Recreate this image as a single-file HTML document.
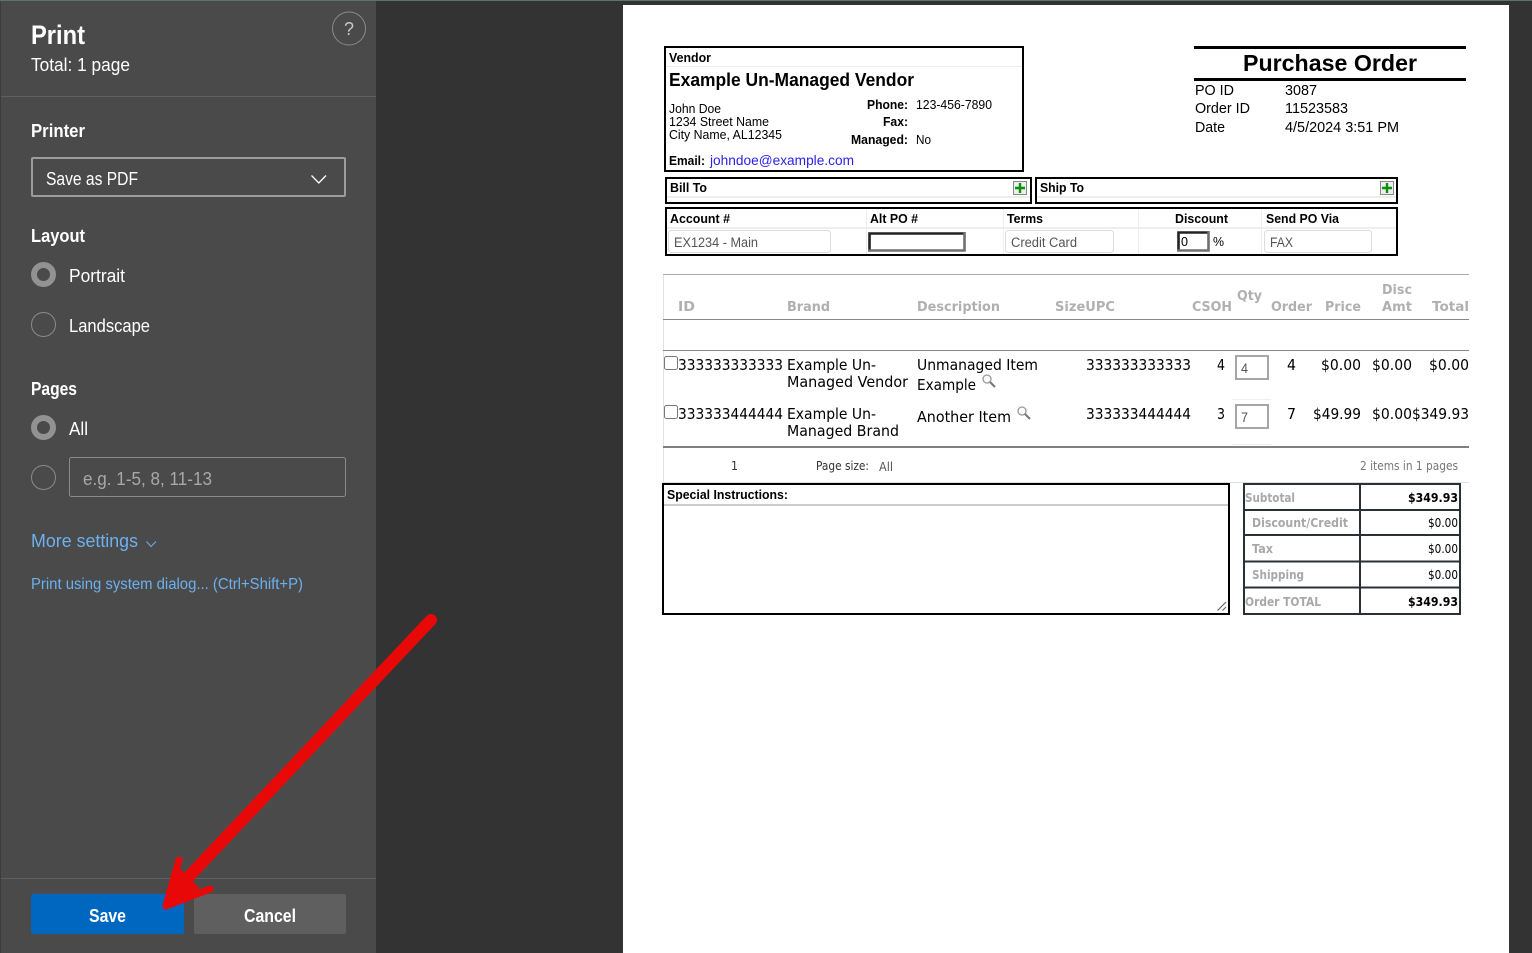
<!DOCTYPE html>
<html><head><meta charset="utf-8"><title>Print</title>
<style>
html,body{margin:0;padding:0;width:1532px;height:953px;overflow:hidden;background:#333}
svg{display:block}
text{font-family:"Liberation Sans",sans-serif;white-space:pre}
.w{fill:#fff;font-size:18.500px}
.sb{fill:#fff;font-size:18.500px;font-weight:bold}
.b{fill:#000;font-weight:bold;font-size:12.500px}
.n{fill:#000;font-size:12.500px}
.po{fill:#000;font-size:14.500px}
.in{fill:#555;font-size:13.500px}
.h{font-family:"DejaVu Sans",sans-serif;font-weight:bold;font-size:13.500px;fill:#b0b0b0}
.r{font-family:"DejaVu Sans",sans-serif;fill:#000;font-size:15.500px}
.l{font-family:"DejaVu Sans",sans-serif;font-weight:bold;font-size:12px;fill:#a8a8a8}
.v{font-family:"DejaVu Sans",sans-serif;fill:#000;font-size:12.500px}
.vb{font-family:"DejaVu Sans",sans-serif;fill:#000;font-size:12.500px;font-weight:bold}
.pg{font-family:"DejaVu Sans",sans-serif;fill:#333;font-size:12.500px}
</style></head>
<body>
<svg width="1532" height="953" viewBox="0 0 1532 953" xmlns="http://www.w3.org/2000/svg">
<rect width="1532" height="953" fill="#333"/>
<rect width="1532" height="1" fill="#5a7472"/>
<rect x="0" y="1" width="376" height="952" fill="#4a4a4a"/>
<rect x="0" y="1" width="1" height="952" fill="#3c3c3c"/>
<rect x="623" y="5" width="886" height="948" fill="#fff"/>

<!-- sidebar -->
<text x="31" y="44" class="sb" style="font-size:26.500px" textLength="54" lengthAdjust="spacingAndGlyphs">Print</text>
<text x="31" y="71" class="w" textLength="99" lengthAdjust="spacingAndGlyphs">Total: 1 page</text>
<circle cx="349" cy="28.500" r="16.500" fill="none" stroke="#8a8a8a" stroke-width="1"/>
<text x="344" y="35" fill="#c8c8c8" style="font-size:18px" textLength="10" lengthAdjust="spacingAndGlyphs">?</text>
<rect x="1" y="96" width="375" height="1" fill="#5f5f5f"/>
<text x="31" y="137" class="sb" textLength="54" lengthAdjust="spacingAndGlyphs">Printer</text>
<rect x="32" y="158" width="313" height="38" rx="1" fill="none" stroke="#9c9c9c" stroke-width="2"/>
<text x="46" y="185" class="w" textLength="92" lengthAdjust="spacingAndGlyphs">Save as PDF</text>
<path d="M311.500 175.500 L318.800 183 L326 175.500" fill="none" stroke="#fff" stroke-width="1.300"/>
<text x="31" y="242" class="sb" textLength="54" lengthAdjust="spacingAndGlyphs">Layout</text>
<circle cx="43.500" cy="274.500" r="9.500" fill="#4a4a4a" stroke="#929292" stroke-width="6"/>
<text x="69" y="282" class="w" textLength="56" lengthAdjust="spacingAndGlyphs">Portrait</text>
<circle cx="43.500" cy="324.500" r="12" fill="none" stroke="#8a8a8a" stroke-width="1"/>
<text x="69" y="332" class="w" textLength="81" lengthAdjust="spacingAndGlyphs">Landscape</text>
<text x="31" y="395" class="sb" textLength="46" lengthAdjust="spacingAndGlyphs">Pages</text>
<circle cx="43.500" cy="427.500" r="9.500" fill="#4a4a4a" stroke="#929292" stroke-width="6"/>
<text x="69" y="435" class="w" textLength="19" lengthAdjust="spacingAndGlyphs">All</text>
<circle cx="43.500" cy="477.500" r="12" fill="none" stroke="#8a8a8a" stroke-width="1"/>
<rect x="69.500" y="457.500" width="276" height="39" rx="2" fill="none" stroke="#8a8a8a" stroke-width="1"/>
<text x="83" y="485" fill="#a8a8a8" style="font-size:18px" textLength="129" lengthAdjust="spacingAndGlyphs">e.g. 1-5, 8, 11-13</text>
<text x="31" y="547" fill="#6cb0ee" style="font-size:18.500px" textLength="107" lengthAdjust="spacingAndGlyphs">More settings</text>
<path d="M146.500 541.500 L151 546.500 L156 541.500" fill="none" stroke="#6cb0ee" stroke-width="1"/>
<text x="31" y="589" fill="#6cb0ee" style="font-size:15.500px" textLength="272" lengthAdjust="spacingAndGlyphs">Print using system dialog... (Ctrl+Shift+P)</text>
<rect x="1" y="878" width="375" height="1" fill="#5f5f5f"/>
<rect x="31" y="894" width="153" height="40" rx="2" fill="#0067c0"/>
<text x="89" y="922" class="sb" textLength="37" lengthAdjust="spacingAndGlyphs">Save</text>
<rect x="194" y="894" width="152" height="40" rx="2" fill="#5f5f5f"/>
<text x="244" y="922" class="sb" textLength="52" lengthAdjust="spacingAndGlyphs">Cancel</text>

<!-- vendor -->
<rect x="665" y="47" width="358" height="124" fill="none" stroke="#000" stroke-width="2"/>
<rect x="666" y="66" width="356" height="1" fill="#eee"/>
<text x="669" y="62" class="b" textLength="42" lengthAdjust="spacingAndGlyphs">Vendor</text>
<text x="669" y="86" class="b" style="font-size:18.500px" textLength="245" lengthAdjust="spacingAndGlyphs">Example Un-Managed Vendor</text>
<text x="669" y="113" class="n" textLength="52" lengthAdjust="spacingAndGlyphs">John Doe</text>
<text x="669" y="126" class="n" textLength="100" lengthAdjust="spacingAndGlyphs">1234 Street Name</text>
<text x="669" y="139" class="n" textLength="113" lengthAdjust="spacingAndGlyphs">City Name, AL12345</text>
<text x="867" y="109" class="b" textLength="41" lengthAdjust="spacingAndGlyphs">Phone:</text>
<text x="916" y="109" class="n" textLength="76" lengthAdjust="spacingAndGlyphs">123-456-7890</text>
<text x="883" y="126" class="b" textLength="25" lengthAdjust="spacingAndGlyphs">Fax:</text>
<text x="851" y="144" class="b" textLength="57" lengthAdjust="spacingAndGlyphs">Managed:</text>
<text x="916" y="144" class="n" textLength="15" lengthAdjust="spacingAndGlyphs">No</text>
<text x="669" y="165" class="b" textLength="36" lengthAdjust="spacingAndGlyphs">Email:</text>
<text x="710" y="165" fill="#2a1ee8" style="font-size:13.500px" textLength="144" lengthAdjust="spacingAndGlyphs">johndoe@example.com</text>

<!-- PO header -->
<rect x="1194" y="46" width="272" height="3" fill="#000"/>
<rect x="1194" y="78" width="272" height="3" fill="#000"/>
<text x="1243" y="71" font-weight="bold" fill="#000" style="font-size:23.500px" textLength="174" lengthAdjust="spacingAndGlyphs">Purchase Order</text>
<text x="1195" y="95" class="po" textLength="39" lengthAdjust="spacingAndGlyphs">PO ID</text>
<text x="1285" y="95" class="po" textLength="32" lengthAdjust="spacingAndGlyphs">3087</text>
<text x="1195" y="113" class="po" textLength="55" lengthAdjust="spacingAndGlyphs">Order ID</text>
<text x="1285" y="113" class="po" textLength="63" lengthAdjust="spacingAndGlyphs">11523583</text>
<text x="1195" y="132" class="po" textLength="30" lengthAdjust="spacingAndGlyphs">Date</text>
<text x="1285" y="132" class="po" textLength="114" lengthAdjust="spacingAndGlyphs">4/5/2024 3:51 PM</text>

<!-- bill / ship -->
<rect x="666" y="178" width="365" height="25" fill="none" stroke="#000" stroke-width="2"/>
<rect x="667" y="196" width="363" height="2" fill="#eee"/>
<text x="670" y="192" class="b" textLength="37" lengthAdjust="spacingAndGlyphs">Bill To</text>
<rect x="1013.500" y="181.500" width="13" height="13" fill="#eee" stroke="#888"/>
<path d="M1020 183V193M1015 188H1025" stroke="#0a900a" stroke-width="2.400"/>
<rect x="1036" y="178" width="361" height="25" fill="none" stroke="#000" stroke-width="2"/>
<rect x="1037" y="196" width="359" height="2" fill="#eee"/>
<text x="1040" y="192" class="b" textLength="44" lengthAdjust="spacingAndGlyphs">Ship To</text>
<rect x="1380.500" y="181.500" width="13" height="13" fill="#eee" stroke="#888"/>
<path d="M1387 183V193M1382 188H1392" stroke="#0a900a" stroke-width="2.400"/>

<!-- account row -->
<rect x="666" y="208" width="731" height="47" fill="none" stroke="#000" stroke-width="2"/>
<path d="M667 228H1396" stroke="#eee" stroke-width="2"/>
<path d="M866.500 209V254M1003.500 209V254M1138.500 209V254M1261.500 209V254" stroke="#eee" stroke-width="1"/>
<text x="670" y="223" class="b" textLength="60" lengthAdjust="spacingAndGlyphs">Account #</text>
<text x="870" y="223" class="b" textLength="48" lengthAdjust="spacingAndGlyphs">Alt PO #</text>
<text x="1007" y="223" class="b" textLength="36" lengthAdjust="spacingAndGlyphs">Terms</text>
<text x="1175" y="223" class="b" textLength="53" lengthAdjust="spacingAndGlyphs">Discount</text>
<text x="1266" y="223" class="b" textLength="73" lengthAdjust="spacingAndGlyphs">Send PO Via</text>
<rect x="668.500" y="230.500" width="162" height="22" rx="3" fill="#fff" stroke="#ddd"/>
<text x="674" y="247" class="in" textLength="84" lengthAdjust="spacingAndGlyphs">EX1234 - Main</text>
<path d="M869.500 251V233.500H965" fill="none" stroke="#222" stroke-width="2.600"/>
<path d="M964.500 232V250.500H868" fill="none" stroke="#707070" stroke-width="2.600"/>
<rect x="1005.500" y="230.500" width="108" height="22" rx="3" fill="#fff" stroke="#ddd"/>
<text x="1011" y="247" class="in" textLength="66" lengthAdjust="spacingAndGlyphs">Credit Card</text>
<path d="M1178.500 251V232.500H1209" fill="none" stroke="#222" stroke-width="2.600"/>
<path d="M1208.500 231V250.500H1177" fill="none" stroke="#707070" stroke-width="2.600"/>
<text x="1181" y="246" class="n" textLength="7" lengthAdjust="spacingAndGlyphs">0</text>
<text x="1213" y="246" class="n" textLength="11" lengthAdjust="spacingAndGlyphs">%</text>
<rect x="1264.500" y="230.500" width="107" height="22" rx="3" fill="#fff" stroke="#ddd"/>
<text x="1270" y="247" class="in" textLength="23" lengthAdjust="spacingAndGlyphs">FAX</text>

<!-- items table -->
<rect x="663" y="274" width="806" height="1" fill="#aaa"/>
<rect x="663" y="275" width="1" height="208" fill="#e2e2e2"/>
<rect x="663" y="319" width="806" height="1" fill="#888"/>
<rect x="663" y="350" width="806" height="1" fill="#888"/>
<rect x="663" y="446" width="806" height="2" fill="#808080"/>
<rect x="663" y="482" width="806" height="1" fill="#ddd"/>
<rect x="1232" y="399" width="39" height="1" fill="#f0f0f0"/>
<rect x="1232" y="444" width="39" height="1" fill="#f0f0f0"/>
<text x="678" y="311" class="h" textLength="17" lengthAdjust="spacingAndGlyphs">ID</text>
<text x="787" y="311" class="h" textLength="43" lengthAdjust="spacingAndGlyphs">Brand</text>
<text x="917" y="311" class="h" textLength="83" lengthAdjust="spacingAndGlyphs">Description</text>
<text x="1055" y="311" class="h" textLength="60" lengthAdjust="spacingAndGlyphs">SizeUPC</text>
<text x="1192" y="311" class="h" textLength="40" lengthAdjust="spacingAndGlyphs">CSOH</text>
<text x="1237" y="300" class="h" textLength="25" lengthAdjust="spacingAndGlyphs">Qty</text>
<text x="1271" y="311" class="h" textLength="41" lengthAdjust="spacingAndGlyphs">Order</text>
<text x="1325" y="311" class="h" textLength="36" lengthAdjust="spacingAndGlyphs">Price</text>
<text x="1382" y="294" class="h" textLength="30" lengthAdjust="spacingAndGlyphs">Disc</text>
<text x="1382" y="311" class="h" textLength="30" lengthAdjust="spacingAndGlyphs">Amt</text>
<text x="1432" y="311" class="h" textLength="37" lengthAdjust="spacingAndGlyphs">Total</text>

<rect x="664.500" y="356.500" width="13" height="13" rx="2" fill="#fff" stroke="#777"/>
<text x="678" y="370" class="r" textLength="105" lengthAdjust="spacingAndGlyphs">333333333333</text>
<text x="787" y="370" class="r" textLength="89" lengthAdjust="spacingAndGlyphs">Example Un-</text>
<text x="787" y="387" class="r" textLength="121" lengthAdjust="spacingAndGlyphs">Managed Vendor</text>
<text x="917" y="370" class="r" textLength="121" lengthAdjust="spacingAndGlyphs">Unmanaged Item</text>
<text x="917" y="390" class="r" textLength="59" lengthAdjust="spacingAndGlyphs">Example</text>
<circle cx="987" cy="379" r="4" fill="#fff" stroke="#999" stroke-width="1.300"/>
<path d="M990 382L995 387" stroke="#777" stroke-width="2"/>
<text x="1086" y="370" class="r" textLength="105" lengthAdjust="spacingAndGlyphs">333333333333</text>
<text x="1217" y="370" class="r" textLength="8" lengthAdjust="spacingAndGlyphs">4</text>
<rect x="1236" y="356" width="32" height="23" fill="#fff" stroke="#a6a6a6" stroke-width="2"/>
<text x="1241" y="373" class="in" textLength="7" lengthAdjust="spacingAndGlyphs">4</text>
<text x="1287" y="370" class="r" textLength="9" lengthAdjust="spacingAndGlyphs">4</text>
<text x="1321" y="370" class="r" textLength="40" lengthAdjust="spacingAndGlyphs">$0.00</text>
<text x="1372" y="370" class="r" textLength="40" lengthAdjust="spacingAndGlyphs">$0.00</text>
<text x="1429" y="370" class="r" textLength="40" lengthAdjust="spacingAndGlyphs">$0.00</text>

<rect x="664.500" y="405.500" width="13" height="13" rx="2" fill="#fff" stroke="#777"/>
<text x="678" y="419" class="r" textLength="105" lengthAdjust="spacingAndGlyphs">333333444444</text>
<text x="787" y="419" class="r" textLength="89" lengthAdjust="spacingAndGlyphs">Example Un-</text>
<text x="787" y="436" class="r" textLength="112" lengthAdjust="spacingAndGlyphs">Managed Brand</text>
<text x="917" y="422" class="r" textLength="94" lengthAdjust="spacingAndGlyphs">Another Item</text>
<circle cx="1022" cy="411" r="4" fill="#fff" stroke="#999" stroke-width="1.300"/>
<path d="M1025 414L1030 419" stroke="#777" stroke-width="2"/>
<text x="1086" y="419" class="r" textLength="105" lengthAdjust="spacingAndGlyphs">333333444444</text>
<text x="1217" y="419" class="r" textLength="8" lengthAdjust="spacingAndGlyphs">3</text>
<rect x="1236" y="405" width="32" height="23" fill="#fff" stroke="#a6a6a6" stroke-width="2"/>
<text x="1241" y="422" class="in" textLength="7" lengthAdjust="spacingAndGlyphs">7</text>
<text x="1287" y="419" class="r" textLength="9" lengthAdjust="spacingAndGlyphs">7</text>
<text x="1313" y="419" class="r" textLength="48" lengthAdjust="spacingAndGlyphs">$49.99</text>
<text x="1372" y="419" class="r" textLength="40" lengthAdjust="spacingAndGlyphs">$0.00</text>
<text x="1412" y="419" class="r" textLength="57" lengthAdjust="spacingAndGlyphs">$349.93</text>

<text x="731" y="470" class="pg" textLength="7" lengthAdjust="spacingAndGlyphs">1</text>
<text x="816" y="470" class="pg" textLength="53" lengthAdjust="spacingAndGlyphs">Page size:</text>
<text x="879" y="471" class="pg" style="fill:#555" textLength="14" lengthAdjust="spacingAndGlyphs">All</text>
<text x="1360" y="470" class="pg" style="fill:#777" textLength="98" lengthAdjust="spacingAndGlyphs">2 items in 1 pages</text>

<!-- special instructions -->
<rect x="663" y="484" width="566" height="130" fill="#fff" stroke="#000" stroke-width="2"/>
<rect x="664" y="504" width="564" height="2" fill="#ccc"/>
<text x="667" y="499" class="b" textLength="121" lengthAdjust="spacingAndGlyphs">Special Instructions:</text>
<path d="M1217.500 610.500L1226 602M1222.500 610.500L1226 607" stroke="#666" stroke-width="1.200"/>

<!-- totals -->
<rect x="1244" y="484" width="216" height="130" fill="#fff" stroke="#2b3036" stroke-width="2"/>
<path d="M1360 484V614" stroke="#2b3036" stroke-width="2"/>
<path d="M1244 510H1460M1244 535H1460M1244 561.500H1460M1244 587.500H1460" stroke="#2b3036" stroke-width="2"/>
<text x="1245" y="502" class="l" textLength="50" lengthAdjust="spacingAndGlyphs">Subtotal</text>
<text x="1252" y="527" class="l" textLength="96" lengthAdjust="spacingAndGlyphs">Discount/Credit</text>
<text x="1252" y="553" class="l" textLength="21" lengthAdjust="spacingAndGlyphs">Tax</text>
<text x="1252" y="579" class="l" textLength="52" lengthAdjust="spacingAndGlyphs">Shipping</text>
<text x="1245" y="606" class="l" textLength="76" lengthAdjust="spacingAndGlyphs">Order TOTAL</text>
<text x="1408" y="502" class="vb" textLength="50" lengthAdjust="spacingAndGlyphs">$349.93</text>
<text x="1428" y="527" class="v" textLength="30" lengthAdjust="spacingAndGlyphs">$0.00</text>
<text x="1428" y="553" class="v" textLength="30" lengthAdjust="spacingAndGlyphs">$0.00</text>
<text x="1428" y="579" class="v" textLength="30" lengthAdjust="spacingAndGlyphs">$0.00</text>
<text x="1408" y="606" class="vb" textLength="50" lengthAdjust="spacingAndGlyphs">$349.93</text>

<!-- arrow -->
<path d="M431 620L180 886" fill="none" stroke="#e90808" stroke-width="12" stroke-linecap="round"/>
<path d="M179 860L166 906L210 889" fill="none" stroke="#e90808" stroke-width="7" stroke-linecap="round" stroke-linejoin="round"/>
<path d="M166 906L178 868L198 888Z" fill="#e90808" stroke="#e90808" stroke-width="2"/>
</svg>
</body></html>
